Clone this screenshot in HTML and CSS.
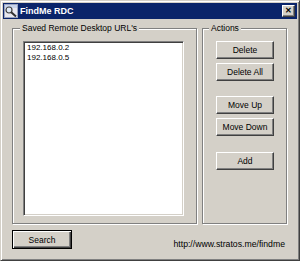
FILE: index.html
```html
<!DOCTYPE html>
<html lang="en">
  <head>
    <meta charset="UTF-8" />
    <meta name="viewport" content="width=device-width, initial-scale=1.0" />
    <title>FindMe RDC</title>
    <link rel="stylesheet" href="styles.css">
  </head>
  <body>
    <div class="window">
      <div class="titlebar">
        <svg class="appicon" width="14" height="14" viewBox="0 0 14 14">
          <rect x="0.5" y="0.5" width="13" height="13" fill="#e8e8f0" stroke="#9aa4c0" />
          <rect x="1" y="1" width="12" height="3" fill="#c8d4ec" />
          <circle cx="5" cy="6" r="3" fill="#dfeaf8" stroke="#404040" stroke-width="1.2" />
          <line x1="7.2" y1="8.2" x2="12" y2="12.5" stroke="#303030" stroke-width="2" />
        </svg>
        <span class="title">FindMe RDC</span>
        <div class="close">&#x2715;</div>
      </div>

      <div class="client">
        <div class="groups">
          <div class="group urls">
            <div class="group-title">Saved Remote Desktop URL's</div>
            <ul class="listbox">
              <li>192.168.0.2</li>
              <li>192.168.0.5</li>
            </ul>
          </div>
          <div class="group actions">
            <div class="group-title">Actions</div>
            <div class="buttons">
              <button>Delete</button>
              <button>Delete All</button>
              <button class="spaced">Move Up</button>
              <button>Move Down</button>
              <button class="spaced more">Add</button>
            </div>
          </div>
        </div>

        <div class="footer">
          <button class="search">Search</button>
          <span class="link">http://www.stratos.me/findme</span>
        </div>
      </div>
    </div>
  </body>
</html>
```

FILE: styles.css
```css
body {
  margin: 0;
  font-family: "Liberation Sans", Arial, sans-serif;
  font-size: 8.5px;
  color: #000;
}

.window {
  width: 300px;
  height: 261px;
  box-sizing: border-box;
  background-color: #d4d0c8;
  border: 1px solid;
  border-color: #d4d0c8 #404040 #404040 #d4d0c8;
  box-shadow: inset 1px 1px #fff, inset -1px -1px #808080;
  padding: 2px;
  display: flex;
  flex-direction: column;
}

.titlebar {
  height: 16px;
  background-color: #0a246a;
  display: flex;
  align-items: center;
  padding-left: 1px;
  gap: 2px;
}

.appicon {
  flex: none;
}

.title {
  color: #fff;
  font-weight: bold;
  font-size: 9px;
  flex: 1;
}

.close {
  width: 11px;
  height: 10px;
  margin-right: 2px;
  background-color: #d4d0c8;
  border: 1px solid;
  border-color: #fff #404040 #404040 #fff;
  box-shadow: inset -1px -1px #808080;
  font-size: 8px;
  font-weight: bold;
  line-height: 10px;
  text-align: center;
  color: #000;
}

.client {
  flex: 1;
  display: flex;
  flex-direction: column;
  padding: 0 10px 0 9px;
}

.groups {
  display: flex;
  gap: 5px;
  margin-top: 9px;
  height: 196px;
}

.group {
  box-sizing: border-box;
  border: 1px solid #808080;
  box-shadow: 1px 1px 0 #fff, inset 1px 1px 0 #fff;
  display: flex;
  flex-direction: column;
}

.urls {
  width: 185px;
  padding: 0 12px 7px 10px;
}

.actions {
  flex: 1;
  padding: 0 0 7px 13px;
}

.group-title {
  width: fit-content;
  line-height: 11px;
  margin-top: -6px;
  padding: 0 2px;
  background-color: #d4d0c8;
}

.urls .group-title {
  margin-left: -3px;
}

.actions .group-title {
  margin-left: -7px;
}

.listbox {
  flex: 1;
  margin: 7px 0 0;
  padding: 1px 2px;
  list-style: none;
  background-color: #fff;
  border: 1px solid;
  border-color: #808080 #fff #fff #808080;
  box-shadow: inset 1px 1px #404040, inset -1px -1px #d4d0c8;
  font-size: 8px;
}

.listbox li {
  line-height: 10px;
  padding-left: 1px;
}

.buttons {
  display: flex;
  flex-direction: column;
  gap: 4px;
  margin-top: 7px;
}

button {
  font-family: "Liberation Sans", Arial, sans-serif;
  font-size: 8.5px;
  color: #000;
  width: 58px;
  height: 18px;
  padding: 0;
  background-color: #d4d0c8;
  border: 1px solid;
  border-color: #fff #404040 #404040 #fff;
  box-shadow: inset -1px -1px #808080;
}

.spaced {
  margin-top: 11px;
}

.more {
  margin-top: 12px;
}

.footer {
  display: flex;
  justify-content: space-between;
  align-items: flex-end;
  margin-top: 6px;
}

.search {
  width: 60px;
  height: 19px;
  outline: 1px solid #000;
  outline-offset: -1px;
  border-color: #000;
  box-shadow: inset 1px 1px #fff, inset -1px -1px #404040, inset -2px -2px #808080;
}

.link {
  margin-right: 2px;
  line-height: 10px;
  font-size: 8.7px;
}
```
